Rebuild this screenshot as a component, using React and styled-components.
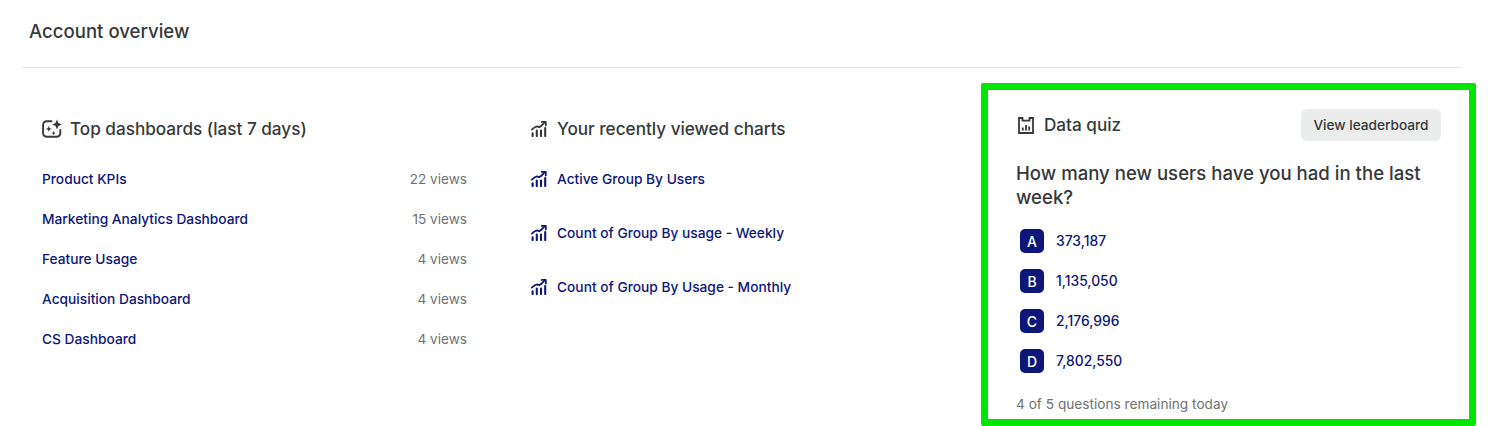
import React from "react";
import styled, { createGlobalStyle } from "styled-components";

const Global = createGlobalStyle`
  html, body { margin: 0; padding: 0; background: #fff; }
  body { font-family: Inter, "Liberation Sans", sans-serif; color: #36393a; -webkit-font-smoothing: antialiased; }
`;
const Page = styled.div`
  width: 1488px;
  height: 426px;
  overflow: hidden;
  box-sizing: border-box;
`;
const Header = styled.header`
  margin: 0 26px 0 21px;
  height: 68px;
  box-sizing: border-box;
  border-bottom: 1px solid #e8e9e9;
  padding: 20px 0 0 8px;
`;
const Title = styled.h1`
  margin: 0;
  font-size: 18.6px;
  line-height: 22px;
  font-weight: 500;
`;
const Columns = styled.div`
  display: flex;
  align-items: flex-start;
  padding: 15px 12px 0 42px;
`;
const Column = styled.section`
  width: ${p => p.$width}px;
  margin-right: ${p => p.$gap || 0}px;
  padding-top: 31px;
  flex: none;
`;
const SectionHead = styled.div`
  display: flex;
  align-items: center;
  gap: ${p => p.$gap}px;
  height: 28px;
  margin: 1px 0 26px;
`;
const SectionTitle = styled.h2`
  margin: 0;
  font-size: 17.15px;
  line-height: 24px;
  font-weight: 500;
`;
const DashRow = styled.div`
  display: flex;
  justify-content: space-between;
  align-items: center;
  height: 20px;
  margin-bottom: 20px;
`;
const LinkText = styled.a`
  color: #0d1679;
  font-size: ${p => (p.$number ? 13.85 : 13.74)}px;
  line-height: 20px;
  font-weight: 500;
`;
const Views = styled.span`
  color: #6f7274;
  font-size: 13.6px;
  line-height: 20px;
`;
const ChartRow = styled.div`
  display: flex;
  align-items: center;
  gap: 10px;
  height: 20px;
  margin-bottom: 34px;
  color: #0d1679;
`;
const Quiz = styled.aside`
  width: 495px;
  height: 343px;
  box-sizing: border-box;
  flex: none;
  border: 7px solid #00e600;
  border-radius: 2px;
  padding: 19px 28px 0 28px;
`;
const QuizHead = styled.div`
  display: flex;
  align-items: center;
  justify-content: space-between;
  height: 32px;
  margin-bottom: 20px;
`;
const QuizTitle = styled.div`
  display: flex;
  align-items: center;
  gap: 10px;
  padding-left: 2px;
`;
const LeaderButton = styled.button`
  height: 32px;
  width: 140px;
  border: 0;
  border-radius: 6px;
  background: #ebecec;
  color: #36393a;
  font: 500 13.65px/20px Inter, sans-serif;
  padding: 0;
`;
const Question = styled.p`
  margin: 0 0 20px;
  font-size: 18.6px;
  line-height: 24px;
  font-weight: 500;
`;
const Answer = styled.div`
  display: flex;
  align-items: center;
  gap: 12px;
  height: 24px;
  margin: 0 0 16px 4px;
`;
const Badge = styled.span`
  display: flex;
  align-items: center;
  justify-content: center;
  width: 24px;
  height: 24px;
  border-radius: 5px;
  background: #0d1679;
  color: #fff;
  font-size: 14px;
  font-weight: 500;
`;
const Footnote = styled.div`
  margin-top: 21px;
  color: #6f7274;
  font-size: 13.66px;
  line-height: 20px;
  font-weight: 400;
`;

const SparkIcon = () => (
  <svg width="20" height="20" viewBox="0 0 20 20" fill="none" stroke="currentColor">
    <path d="M9.5 2.2H4.7A3.6 3.6 0 0 0 1.1 5.8v8.4a3.6 3.6 0 0 0 3.6 3.6h10a3.6 3.6 0 0 0 3.6-3.6V11" strokeWidth="1.9" strokeLinecap="round" />
    <path d="M15 .6l1.4 3.5 3.5 1.4-3.5 1.4L15 10.4l-1.4-3.5-3.5-1.4 3.5-1.4z" fill="currentColor" stroke="none" />
    <path d="M6.8 7l.8 2.1 2.1.8-2.1.8-.8 2.1-.8-2.1-2.1-.8 2.1-.8zM11.6 12l.6 1.5 1.5.6-1.5.6-.6 1.5-.6-1.5-1.5-.6 1.5-.6z" fill="currentColor" stroke="none" />
  </svg>
);
const ChartIcon = () => (
  <svg width="16" height="16" viewBox="0 0 16 16" fill="none" stroke="currentColor">
    <path d="M.9 8.6C2.6 7 4 5.6 6 5.4l2.2.8c1.8-.7 3.6-3 5.2-4.7" strokeWidth="1.8" strokeLinecap="round" strokeLinejoin="round" />
    <path d="M10.8.9h4v3.6" strokeWidth="1.8" strokeLinecap="round" strokeLinejoin="round" />
    <path d="M1.6 12.4V15M5.8 9.6V15M10 9.6V15M14.2 7V15" strokeWidth="2.1" strokeLinecap="round" />
  </svg>
);
const QuizIcon = () => (
  <svg width="16" height="17" viewBox="0 0 16 17" fill="none" stroke="currentColor">
    <path d="M4.5 1H1v15h14V1h-3.5v2.6h-7z" strokeWidth="1.8" />
    <path d="M4.8 10.5v3M8 8v5.5M11.2 9.5v4" strokeWidth="1.8" />
  </svg>
);

const dashboards = [
  ["Product KPIs", "22 views"],
  ["Marketing Analytics Dashboard", "15 views"],
  ["Feature Usage", "4 views"],
  ["Acquisition Dashboard", "4 views"],
  ["CS Dashboard", "4 views"],
];
const charts = ["Active Group By Users", "Count of Group By usage - Weekly", "Count of Group By Usage - Monthly"];
const answers = [["A", "373,187"], ["B", "1,135,050"], ["C", "2,176,996"], ["D", "7,802,550"]];

export default function App() {
  return (
    <Page>
      <Global />
      <Header><Title>Account overview</Title></Header>
      <Columns>
        <Column $width={425} $gap={64}>
          <SectionHead $gap={8}>
            <SparkIcon />
            <SectionTitle>Top dashboards (last 7 days)</SectionTitle>
          </SectionHead>
          {dashboards.map(([name, views]) => (
            <DashRow key={name}><LinkText>{name}</LinkText><Views>{views}</Views></DashRow>
          ))}
        </Column>
        <Column $width={450}>
          <SectionHead $gap={10}>
            <ChartIcon />
            <SectionTitle>Your recently viewed charts</SectionTitle>
          </SectionHead>
          {charts.map(name => (
            <ChartRow key={name}><ChartIcon /><LinkText>{name}</LinkText></ChartRow>
          ))}
        </Column>
        <Quiz>
          <QuizHead>
            <QuizTitle><QuizIcon /><SectionTitle>Data quiz</SectionTitle></QuizTitle>
            <LeaderButton>View leaderboard</LeaderButton>
          </QuizHead>
          <Question>How many new users have you had in the last week?</Question>
          {answers.map(([letter, value]) => (
            <Answer key={letter}><Badge>{letter}</Badge><LinkText $number>{value}</LinkText></Answer>
          ))}
          <Footnote>4 of 5 questions remaining today</Footnote>
        </Quiz>
      </Columns>
    </Page>
  );
}
